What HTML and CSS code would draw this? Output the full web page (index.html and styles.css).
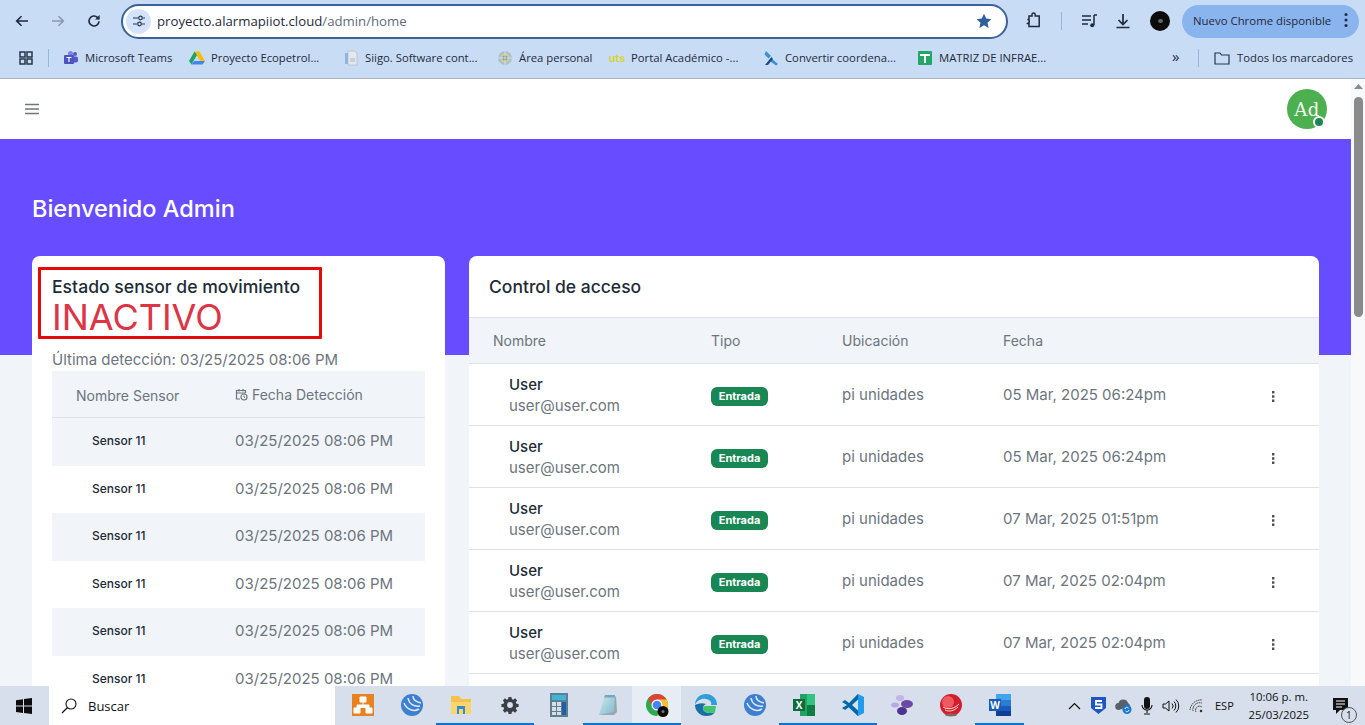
FILE: index.html
```html
<!DOCTYPE html>
<html lang="es">
<head>
    <meta charset="UTF-8">
    <title>Dashboard</title>
    <link rel="stylesheet" href="styles.css">
</head>
<body>
    <!-- navegador -->
    <header class="browser">
        <div class="toolbar">
            <svg class="nav-icon" viewBox="0 0 16 16"><path d="M14 8H3M7.5 3.2 2.700 8l4.800 4.800" fill="none" stroke="#1f2a3a" stroke-width="1.600"/></svg>
            <svg class="nav-icon" viewBox="0 0 16 16"><path d="M2 8h11M8.500 3.200 13.300 8l-4.800 4.800" fill="none" stroke="#8b98ab" stroke-width="1.600"/></svg>
            <svg class="nav-icon" viewBox="0 0 16 16"><path d="M13 8.200A5 5 0 1 1 11.400 4.300L13 6" fill="none" stroke="#1f2a3a" stroke-width="1.600"/><path d="M13.600 2v4.600H9z" fill="#1f2a3a"/></svg>
            <div class="omnibox">
                <span class="site-chip">
                    <svg width="14" height="14" viewBox="0 0 14 14"><path d="M1 4h5M10 10h3M1 10h4M11 4h2" stroke="#26364c" stroke-width="1.200" fill="none"/><circle cx="8.500" cy="4" r="1.800" fill="none" stroke="#26364c" stroke-width="1.200"/><circle cx="7.500" cy="10" r="1.800" fill="none" stroke="#26364c" stroke-width="1.200"/></svg>
                </span>
                <span class="url">proyecto.alarmapiiot.cloud<span class="url-path">/admin/home</span></span>
                <svg class="star" width="16" height="16" viewBox="0 0 16 16"><path d="m8 .8 2.200 4.800 5.200.6-3.900 3.500 1.100 5.200L8 12.300l-4.600 2.600 1.100-5.200L.6 6.200l5.200-.6z" fill="#2f5f9e"/></svg>
            </div>
            <svg class="tool-icon ext" viewBox="0 0 20 20"><path d="M5 5h3V3.500a1.600 1.600 0 0 1 3.200 0V5h4v10.500H5v-3H3.400v-.1a1.900 1.900 0 0 0 0-3.800H5z" fill="none" stroke="#1f2a3a" stroke-width="1.500"/></svg>
            <span class="tool-sep"></span>
            <svg class="tool-icon media" viewBox="0 0 20 20"><path d="M3 5h9M3 9h9M3 13h6" stroke="#1f2a3a" stroke-width="1.400"/><path d="M15 4v10" stroke="#1f2a3a" stroke-width="1.500"/><path d="M15 4h3" stroke="#1f2a3a" stroke-width="1.500"/><circle cx="13.200" cy="14.300" r="2" fill="#1f2a3a"/></svg>
            <svg class="tool-icon download" viewBox="0 0 20 20"><path d="M10 3v10M5.500 9l4.500 4.500L14.500 9M3.500 16.500h13" fill="none" stroke="#1f2a3a" stroke-width="1.700"/></svg>
            <span class="profile-dot"><span></span></span>
            <div class="update-pill">
                <span>Nuevo Chrome disponible</span>
                <svg width="4" height="16" viewBox="0 0 4 16"><circle cx="2" cy="2.500" r="1.500" fill="#1f2a3a"/><circle cx="2" cy="8" r="1.500" fill="#1f2a3a"/><circle cx="2" cy="13.500" r="1.500" fill="#1f2a3a"/></svg>
            </div>
        </div>
        <div class="bookmarks">
            <svg class="apps" width="14" height="14" viewBox="0 0 14 14"><path d="M1 1h5v5H1zM8 1h5v5H8zM1 8h5v5H1zM8 8h5v5H8z" fill="none" stroke="#26364c" stroke-width="1.500"/></svg>
            <span class="bm-sep"></span>
            <span class="bm"><svg class="fav" viewBox="0 0 16 16"><circle cx="12" cy="4" r="2" fill="#5059c9"/><rect x="9" y="6.500" width="6" height="6" rx="2" fill="#5059c9"/><circle cx="7.500" cy="3.500" r="2.500" fill="#7b83eb"/><rect x="1" y="5" width="10" height="9" rx="1" fill="#4b53bc"/><path d="M3.500 7.500h5M6 7.500V12" stroke="#fff" stroke-width="1.200"/></svg>Microsoft Teams</span>
            <span class="bm"><svg class="fav" viewBox="0 0 16 16"><path d="M5.500 1.500h5L16 11h-5z" fill="#fbbc04"/><path d="M5.500 1.500 0 11l2.500 3.500L8 5z" fill="#1fa463"/><path d="M2.500 14.500h11L16 11H5.200z" fill="#4285f4"/></svg>Proyecto Ecopetrol...</span>
            <span class="bm"><svg class="fav" viewBox="0 0 16 16"><path d="M5 1h7l2 2v12H5z" fill="#e3e8ee" stroke="#b5bfca" stroke-width=".8"/><path d="M2 3h3v11H2z" fill="#8fb6de"/><path d="M7 9h5M7 11h5" stroke="#aab4c0"/></svg>Siigo. Software cont...</span>
            <span class="bm"><svg class="fav" viewBox="0 0 16 16"><circle cx="8" cy="8" r="7" fill="#a9c4cc"/><circle cx="8" cy="8" r="4.500" fill="#d9c98f"/><circle cx="8" cy="8" r="2.500" fill="#6f9fb2"/><path d="M8 1v14M1 8h14" stroke="#e3ecef" stroke-width=".7"/></svg>Área personal</span>
            <span class="bm"><svg class="fav" viewBox="0 0 16 16"><text x="8" y="12" class="fav-uts">uts</text></svg>Portal Académico -...</span>
            <span class="bm"><svg class="fav" viewBox="0 0 16 16"><path d="m3 1 5 5-2.500 2.500-4-4z" fill="#3f8fd2"/><path d="m8 8 7 6-2 1.500-7-5z" fill="#3f8fd2"/><path d="M2 15 8.500 7l1.500 2-5 6z" fill="#1e4f80"/></svg>Convertir coordena...</span>
            <span class="bm"><svg class="fav" viewBox="0 0 16 16"><rect x="1" y="1" width="14" height="14" rx="1" fill="#23a566"/><path d="M3 5h10M8 5v8" stroke="#fff" stroke-width="2"/></svg>MATRIZ DE INFRAE...</span>
            <span class="bm-more">»</span>
            <span class="bm-sep"></span>
            <svg class="folder" width="16" height="14" viewBox="0 0 16 14"><path d="M1 2h5l1.500 2H15v9H1z" fill="none" stroke="#26364c" stroke-width="1.200"/></svg>
            <span class="bm-all">Todos los marcadores</span>
        </div>
    </header>

    <!-- pagina -->
    <div class="viewport">
        <main class="page">
            <div class="topbar">
                <svg width="16" height="12" viewBox="0 0 16 12"><path d="M1 1.500h14M1 6h14M1 10.500h14" stroke="#6c757d" stroke-width="1.700"/></svg>
                <span class="avatar">Ad<span class="avatar-status"></span></span>
            </div>
            <div class="content">
                <h1>Bienvenido Admin</h1>
                <div class="cards">
                    <section class="card sensor-card">
                        <div class="status-box">
                            <h2>Estado sensor de movimiento</h2>
                            <div class="status-value">INACTIVO</div>
                        </div>
                        <p class="last-seen">Última detección: 03/25/2025 08:06 PM</p>
                        <div class="sensor-table">
                            <div class="sensor-head">
                                <span>Nombre Sensor</span>
                                <span class="head-date">
                                    <svg width="13" height="13" viewBox="0 0 13 13"><path d="M5 11H1.500V2.500h9V5M1.500 5h9M4 1v2.500M8 1v2.500" fill="none" stroke="#6c757d" stroke-width="1.200"/><circle cx="9" cy="9" r="3" fill="none" stroke="#6c757d" stroke-width="1.200"/><path d="M9 7.500V9l1 .7" fill="none" stroke="#6c757d"/></svg>
                                    Fecha Detección
                                </span>
                            </div>
                            <div class="sensor-row"><span class="sensor-name">Sensor 11</span><span>03/25/2025 08:06 PM</span></div>
                            <div class="sensor-row"><span class="sensor-name">Sensor 11</span><span>03/25/2025 08:06 PM</span></div>
                            <div class="sensor-row"><span class="sensor-name">Sensor 11</span><span>03/25/2025 08:06 PM</span></div>
                            <div class="sensor-row"><span class="sensor-name">Sensor 11</span><span>03/25/2025 08:06 PM</span></div>
                            <div class="sensor-row"><span class="sensor-name">Sensor 11</span><span>03/25/2025 08:06 PM</span></div>
                            <div class="sensor-row"><span class="sensor-name">Sensor 11</span><span>03/25/2025 08:06 PM</span></div>
                        </div>
                    </section>
                    <section class="card access-card">
                        <h2 class="access-title">Control de acceso</h2>
                        <div class="access-head">
                            <span>Nombre</span><span>Tipo</span><span>Ubicación</span><span>Fecha</span>
                        </div>
                        <div class="access-row">
                            <div class="user"><strong>User</strong><span>user@user.com</span></div>
                            <span><span class="badge">Entrada</span></span>
                            <span>pi unidades</span>
                            <span>05 Mar, 2025 06:24pm</span>
                            <svg class="kebab" width="3" height="11" viewBox="0 0 3 11"><path d="M0 0h2.400v2.400H0zM0 4.300h2.400v2.400H0zM0 8.600h2.400V11H0z" fill="#495057"/></svg>
                        </div>
                        <div class="access-row">
                            <div class="user"><strong>User</strong><span>user@user.com</span></div>
                            <span><span class="badge">Entrada</span></span>
                            <span>pi unidades</span>
                            <span>05 Mar, 2025 06:24pm</span>
                            <svg class="kebab" width="3" height="11" viewBox="0 0 3 11"><path d="M0 0h2.400v2.400H0zM0 4.300h2.400v2.400H0zM0 8.600h2.400V11H0z" fill="#495057"/></svg>
                        </div>
                        <div class="access-row">
                            <div class="user"><strong>User</strong><span>user@user.com</span></div>
                            <span><span class="badge">Entrada</span></span>
                            <span>pi unidades</span>
                            <span>07 Mar, 2025 01:51pm</span>
                            <svg class="kebab" width="3" height="11" viewBox="0 0 3 11"><path d="M0 0h2.400v2.400H0zM0 4.300h2.400v2.400H0zM0 8.600h2.400V11H0z" fill="#495057"/></svg>
                        </div>
                        <div class="access-row">
                            <div class="user"><strong>User</strong><span>user@user.com</span></div>
                            <span><span class="badge">Entrada</span></span>
                            <span>pi unidades</span>
                            <span>07 Mar, 2025 02:04pm</span>
                            <svg class="kebab" width="3" height="11" viewBox="0 0 3 11"><path d="M0 0h2.400v2.400H0zM0 4.300h2.400v2.400H0zM0 8.600h2.400V11H0z" fill="#495057"/></svg>
                        </div>
                        <div class="access-row">
                            <div class="user"><strong>User</strong><span>user@user.com</span></div>
                            <span><span class="badge">Entrada</span></span>
                            <span>pi unidades</span>
                            <span>07 Mar, 2025 02:04pm</span>
                            <svg class="kebab" width="3" height="11" viewBox="0 0 3 11"><path d="M0 0h2.400v2.400H0zM0 4.300h2.400v2.400H0zM0 8.600h2.400V11H0z" fill="#495057"/></svg>
                        </div>
                        <div class="access-row"></div>
                    </section>
                </div>
            </div>
        </main>
        <div class="scrollbar">
            <svg width="9" height="5" viewBox="0 0 9 5"><path d="M4.500 0 9 5H0z" fill="#8a8a8a"/></svg>
            <span class="scroll-thumb"></span>
        </div>
    </div>

    <!-- barra de tareas -->
    <footer class="taskbar">
        <svg class="win-logo" width="16" height="16" viewBox="0 0 16 16"><path d="M0 2.200 7 1.200v6.400H0zM8 1l8-1v7.600H8zM0 8.500h7v6.400l-7-1zM8 8.500h8V16l-8-1.100z" fill="#0d0d0d"/></svg>
        <div class="search">
            <svg width="18" height="18" viewBox="0 0 18 18"><circle cx="11" cy="7" r="5" fill="none" stroke="#111" stroke-width="1.100"/><path d="M7.500 10.500 2 16" stroke="#111" stroke-width="1.300"/></svg>
            <span>Buscar</span>
        </div>
        <div class="apps-row">
            <span class="app"><svg viewBox="0 0 24 24"><rect x="1" y="1" width="22" height="22" fill="#e8811f"/><path d="M9 4h6v5H9zM3 15h6v5H3zM15 15h6v5h-6zM12 9v3M6 15v-3h12v3" fill="#fff" stroke="#fff"/></svg></span>
            <span class="app"><svg viewBox="0 0 24 24"><circle cx="12" cy="12" r="11" fill="#3f7fcf"/><path d="M4 10c3 7 10 9 15 6M8 5c1 6 6 9 12 8M13 3c0 4 3 6 8 7" fill="none" stroke="#dfeaf7" stroke-width="1.500"/></svg></span>
            <span class="app running"><svg viewBox="0 0 24 24"><path d="M2 3h8l2 3h10v15H2z" fill="#f4c24a"/><path d="M2 9h20v12H2z" fill="#fbd56c"/><path d="M8 13h8v8h-2v-5h-4v5H8z" fill="#2b8fd6"/></svg></span>
            <span class="app running"><svg class="gear" viewBox="0 0 24 24"><path d="M10 2h4l.5 3 2 .8L19 4l2.800 2.800L20 9.300l.8 2 3 .5v4l-3 .5-.8 2 1.800 2.500L19 23.600l-2.500-1.800-2 .8-.5 3h-4l-.5-3-2-.8L5 23.600l-2.800-2.800L4 18.300l-.8-2-3-.5v-4l3-.5.8-2-1.800-2.500L5 4l2.500 1.800 2-.8z" transform="translate(1.500 0.500) scale(.875)" fill="#3b3f46"/><circle cx="12" cy="12" r="3.500" fill="#d6dfeb"/></svg></span>
            <span class="app"><svg viewBox="0 0 24 24"><rect x="3" y="0" width="18" height="24" fill="#5f7f91"/><rect x="5" y="2" width="14" height="5" fill="#3fb6d8"/><path d="M5 9h4v4H5zM10 9h4v4h-4zM5 14h4v4H5zM10 14h4v4h-4zM5 19h4v3H5zM10 19h4v3h-4z" fill="#d8dfe4"/><path d="M15 9h4v13h-4z" fill="#1e5fa8"/></svg></span>
            <span class="app running"><svg viewBox="0 0 24 24"><defs><linearGradient id="nota" x1="0" y1="0" x2="1" y2="1"><stop offset="0" stop-color="#cfe9ef"/><stop offset="1" stop-color="#7fb9cc"/></linearGradient></defs><path d="M20 3l1 16-3 3H3z" fill="#9aa6a8"/><path d="M9 2h10l-1 17-15 3z" fill="url(#nota)"/><path d="M9 2h10l-.3 2.500H8z" fill="#6fa9bb"/></svg></span>
            <span class="app running active"><svg viewBox="0 0 24 24"><circle cx="12" cy="12" r="11" fill="#2da94f"/><path d="M21.530 6.500A11 11 0 0 0 3.300 5.200L7.500 14.600 12 12z" fill="#dd4437"/><path d="M21.530 6.500A11 11 0 0 1 12 23l4.500-8.500L12 6.500z" fill="#fbc02d"/><circle cx="12" cy="12" r="5.500" fill="#fff"/><circle cx="12" cy="12" r="4.300" fill="#4285f4"/><circle cx="18" cy="18.500" r="5.500" fill="#0c0c0c"/><circle cx="18" cy="18.500" r="1.500" fill="#777"/></svg></span>
            <span class="app"><svg viewBox="0 0 24 24"><path d="M23 12C23 5 18 1 12 1 5 1 1 6 1 12c2-5 7-7 11-6 5 1 6 4 5 6h6z" fill="#2d9fd8"/><path d="M1 12c0 6 5 11 11 11 4 0 7-1 9-4-5 2-12 1-12-4 0-2 1-3 3-4-5-2-9 0-11 1z" fill="#1770a8"/><path d="M9 15c0 5 7 6 12 4l1-6H11c-1 0-2 1-2 2z" fill="#45c46b"/></svg></span>
            <span class="app"><svg viewBox="0 0 24 24"><circle cx="12" cy="12" r="11" fill="#3f7fcf"/><path d="M4 10c3 7 10 9 15 6M8 5c1 6 6 9 12 8M13 3c0 4 3 6 8 7" fill="none" stroke="#dfeaf7" stroke-width="1.500"/></svg></span>
            <span class="app running"><svg viewBox="0 0 24 24"><path d="M8 1h15v22H8z" fill="#21a366"/><path d="M15 1h8v11h-8z" fill="#33c481"/><path d="M15 12h8v11h-8z" fill="#107c41"/><rect x="1" y="6" width="12" height="12" fill="#0c6b38"/><text x="7" y="15.500" class="app-letter">X</text></svg></span>
            <span class="app running"><svg viewBox="0 0 24 24"><path d="M17 1 23 4v16l-6 3L6 13z" fill="#1f9cf0"/><path d="M17 1v22L8 14l-4 3-3-2 5-3-5-3 3-2 4 3z" fill="#0065a9"/><path d="m17 6.500-6 5.500 6 5.500z" fill="#d6dfeb"/></svg></span>
            <span class="app"><svg viewBox="0 0 24 24"><ellipse cx="10" cy="5" rx="4" ry="3" fill="#c4b5e8"/><ellipse cx="5" cy="12" rx="4" ry="2.500" fill="#b9a7e6"/><ellipse cx="17" cy="11" rx="6" ry="4" fill="#6a4aa5"/><ellipse cx="12" cy="18" rx="5" ry="4" fill="#4e3390"/></svg></span>
            <span class="app"><svg viewBox="0 0 24 24"><circle cx="12" cy="12" r="11" fill="#d31e2b"/><circle cx="9" cy="9" r="6" fill="#ee5a5f"/><path d="M4 14c5 3 11 2 16-3M6 17c4 2 9 1 13-3" fill="none" stroke="#fbdcdc" stroke-width="1"/><ellipse cx="12" cy="22" rx="6" ry="1.500" fill="#866"/></svg></span>
            <span class="app running"><svg viewBox="0 0 24 24"><path d="M8 1h15v22H8z" fill="#2b7cd3"/><path d="M8 1h15v6H8z" fill="#41a5ee"/><path d="M8 13h15v5H8z" fill="#185abd"/><path d="M8 18h15v5H8z" fill="#103f91"/><rect x="1" y="6" width="12" height="12" fill="#1a5bb5"/><text x="7" y="15.500" class="app-letter">W</text></svg></span>
        </div>
        <div class="tray">
            <svg class="tray-chevron" width="13" height="8" viewBox="0 0 13 8"><path d="m1 7 5.500-5.500L12 7" fill="none" stroke="#111" stroke-width="1.200"/></svg>
            <svg class="tray-s" width="15" height="17" viewBox="0 0 15 17"><path d="M0 0h15v11l-7.500 6L0 11z" fill="#1e56c4"/><path d="M11 4H5v3.500h5.500v3.500H4" fill="none" stroke="#fff" stroke-width="1.800"/></svg>
            <svg class="tray-cloud" width="17" height="16" viewBox="0 0 17 16"><path d="M4 12a3.500 3.500 0 0 1-.5-7A5 5 0 0 1 13 5a3.500 3.500 0 0 1 2 3" fill="#5a6068"/><circle cx="12" cy="11.500" r="4.500" fill="#1976d2"/><path d="M10 11a2 2 0 0 1 3.500-1M14 12a2 2 0 0 1-3.500 1" fill="none" stroke="#fff"/></svg>
            <svg class="tray-mic" width="12" height="18" viewBox="0 0 12 18"><rect x="3" y="0" width="6" height="12" rx="3" fill="#111"/><path d="M1 8a5 5 0 0 0 10 0M6 13v3M3 17h6" fill="none" stroke="#111" stroke-width="1.100"/></svg>
            <svg class="tray-vol" width="18" height="16" viewBox="0 0 18 16"><path d="M1 6h2.500L7 3v10L3.500 10H1z" fill="none" stroke="#111"/><path d="M10 5.500a3.500 3.500 0 0 1 0 5M12 3.500a6.500 6.500 0 0 1 0 9M14 1.500a9 9 0 0 1 0 13" fill="none" stroke="#111"/></svg>
            <svg class="tray-wifi" width="15" height="15" viewBox="0 0 15 15"><path d="M1 12A11 11 0 0 1 13 2M4 13a7 7 0 0 1 9-8M7 14a4 4 0 0 1 6-5" fill="none" stroke="#333" stroke-dasharray="1.500 .7"/><circle cx="12" cy="13" r="1.300" fill="#333"/></svg>
            <span class="tray-lang">ESP</span>
            <span class="clock"><span>10:06 p. m.</span><span>25/03/2025</span></span>
            <span class="notif">
                <svg width="18" height="18" viewBox="0 0 18 18"><path d="M1 1h15v12H8l-4 4v-4H1z" fill="#111"/><path d="M4 4h9M4 7h9M4 10h6" stroke="#fff" stroke-width="1"/></svg>
                <span class="notif-count">1</span>
            </span>
        </div>
    </footer>
</body>
</html>
```

FILE: styles.css
```css
:root {
    --purple: #674dff;
    --page-bg: #f1f4f9;
    --text-dark: #212b36;
    --text-muted: #6c757d;
    --line: #dee2e6;
    --chrome: #c9dcf5;
}

* {
    box-sizing: border-box;
}

body {
    margin: 0;
    height: 725px;
    overflow: hidden;
    display: flex;
    flex-direction: column;
    font-family: Inter, "Liberation Sans", sans-serif;
    background-color: var(--page-bg);
}

/* navegador */
.browser {
    height: 79px;
    flex: none;
    background-color: var(--chrome);
    border-bottom: 1px solid #a9b4c4;
    font-family: "Open Sans", "Liberation Sans", sans-serif;
    color: #1f2a3a;
}

.toolbar {
    height: 42px;
    display: flex;
    align-items: center;
    padding-left: 14px;
}

.nav-icon {
    width: 16px;
    height: 16px;
    margin-right: 20px;
    flex: none;
}

.omnibox {
    width: 887px;
    height: 35px;
    margin-left: -1px;
    display: flex;
    align-items: center;
    background-color: white;
    border: 2px solid #3b6397;
    border-radius: 18px;
    padding: 0 8px 0 3px;
    flex: none;
}

.site-chip {
    width: 25px;
    height: 25px;
    border-radius: 50%;
    background-color: #d3e3fd;
    display: flex;
    align-items: center;
    justify-content: center;
    flex: none;
}

.url {
    margin-left: 6px;
    font-size: 13.2px;
    color: #1f2a3a;
    flex: 1;
}

.url-path {
    color: #5f6b7a;
}

.star {
    margin-right: 6px;
}

.tool-icon {
    width: 20px;
    height: 20px;
    flex: none;
}

.ext {
    margin-left: 16px;
}

.tool-sep {
    width: 1px;
    height: 18px;
    background-color: #9db5d6;
    margin: 0 17px;
    flex: none;
}

.download {
    margin-left: 14px;
}

.profile-dot {
    width: 20px;
    height: 20px;
    margin-left: 17px;
    border-radius: 50%;
    background-color: #0b0b0b;
    display: flex;
    align-items: center;
    justify-content: center;
    flex: none;
}

.profile-dot span {
    width: 5px;
    height: 4px;
    border-radius: 50%;
    background-color: #666;
}

.update-pill {
    width: 177px;
    height: 33px;
    margin-left: 12px;
    border-radius: 17px;
    background-color: #8ab4ee;
    display: flex;
    align-items: center;
    justify-content: space-between;
    padding: 0 11px 2px 11px;
    font-size: 11.4px;
    flex: none;
}

.bookmarks {
    height: 36px;
    display: flex;
    align-items: center;
    padding: 0 0 5px 19px;
    font-size: 11.3px;
}

.apps {
    flex: none;
}

.bm-sep {
    width: 1px;
    height: 18px;
    background-color: #9db5d6;
    margin: 0 14px 0 15px;
    flex: none;
}

.bm {
    width: 154px;
    display: flex;
    align-items: center;
    gap: 6px;
    white-space: nowrap;
    flex: none;
}

.bm:nth-of-type(2) {
    width: 126px;
}

.bm:nth-of-type(5) {
    width: 112px;
}

.fav {
    width: 16px;
    height: 16px;
    flex: none;
}

.fav-uts {
    fill: #d8d52a;
    font-family: "Liberation Sans", sans-serif;
    font-size: 11px;
    font-weight: 700;
    text-anchor: middle;
}

.bm-more {
    margin-left: 101px;
    width: 11px;
    font-size: 15px;
    line-height: 1;
    margin-top: -3px;
}

.folder {
    margin-left: 1px;
}

.bm-all {
    margin-left: 7px;
    white-space: nowrap;
}

/* pagina */
.viewport {
    flex: 1;
    min-height: 0;
    display: flex;
}

.page {
    width: 1351px;
    flex: none;
    overflow: hidden;
}

.topbar {
    height: 60px;
    background-color: white;
    display: flex;
    align-items: center;
    justify-content: space-between;
    padding: 0 24px;
}

.avatar {
    position: relative;
    width: 40px;
    height: 40px;
    border-radius: 50%;
    background-color: #4caf50;
    color: #f4f7f2;
    font-family: "DejaVu Serif", serif;
    font-size: 18px;
    letter-spacing: .5px;
    display: flex;
    align-items: center;
    justify-content: center;
}

/* bolita encima del avatar */
.avatar-status {
    position: absolute;
    right: 2px;
    bottom: 1px;
    width: 12px;
    height: 12px;
    border-radius: 50%;
    background-color: #198754;
    border: 2px solid white;
}

.content {
    padding: 55px 32px 0;
    background: linear-gradient(var(--purple) 216px, var(--page-bg) 216px);
}

h1 {
    margin: 0 0 32px;
    height: 30px;
    font-size: 23.5px;
    line-height: 30px;
    font-weight: 500;
    color: white;
}

.cards {
    display: flex;
    gap: 24px;
    align-items: flex-start;
}

.card {
    background-color: white;
    border-radius: 8px;
}

.sensor-card {
    width: 413px;
    flex: none;
    padding: 11px 20px 0;
}

.status-box {
    width: 284px;
    height: 72px;
    margin-left: -14px;
    padding: 7px 0 0 11px;
    border: 3px solid #e40a0a;
    border-radius: 1px;
}

.status-box h2 {
    margin: 0;
    font-size: 17.6px;
    line-height: 20px;
    font-weight: 450;
    color: var(--text-dark);
    white-space: nowrap;
}

.status-value {
    font-size: 36px;
    line-height: 41px;
    color: #dc3545;
    white-space: nowrap;
}

.last-seen {
    margin: 11px 0 0;
    font-size: 15px;
    line-height: 20px;
    color: var(--text-muted);
    white-space: nowrap;
}

.sensor-table {
    font-size: 15px;
    color: var(--text-muted);
    margin-top: 1px;
}

.sensor-head {
    height: 47px;
    display: grid;
    grid-template-columns: 159px 1fr;
    align-items: center;
    padding-left: 24px;
    font-size: 14px;
    font-weight: 400;
    background-color: var(--page-bg);
    border-bottom: 1px solid var(--line);
}

.sensor-head span:first-child {
    margin-top: 2px;
}

.head-date {
    display: flex;
    align-items: center;
    gap: 4px;
}

.sensor-row {
    height: 47.5px;
    display: grid;
    grid-template-columns: 143px 1fr;
    align-items: center;
    padding: 0 0 2px 40px;
    white-space: nowrap;
}

.sensor-row:nth-child(even) {
    background-color: var(--page-bg);
}

.sensor-name {
    font-size: 12px;
    font-weight: 450;
    color: var(--text-dark);
}

.access-card {
    width: 850px;
    flex: none;
    font-size: 15px;
    color: var(--text-muted);
}

.access-title {
    margin: 0;
    height: 62px;
    padding: 20px 20px 0;
    font-size: 17.5px;
    line-height: 22px;
    font-weight: 450;
    color: var(--text-dark);
    border-bottom: 1px solid var(--line);
}

.access-head,
.access-row {
    display: grid;
    grid-template-columns: 218px 131px 161px 1fr 3px;
    align-items: center;
    padding-left: 24px;
    padding-right: 44px;
}

.access-head {
    height: 46px;
    font-size: 14px;
    background-color: var(--page-bg);
    border-bottom: 1px solid var(--line);
}

.access-row {
    height: 62px;
    border-bottom: 1px solid var(--line);
}

.user {
    padding-left: 16px;
    display: flex;
    flex-direction: column;
    gap: 2px;
    line-height: 19px;
}

.user strong {
    font-weight: 450;
    color: var(--text-dark);
}

.badge {
    display: inline-block;
    width: 57px;
    height: 19px;
    margin-top: 3px;
    border-radius: 6px;
    background-color: #198754;
    color: white;
    font-size: 11px;
    font-weight: 700;
    line-height: 19px;
    text-align: center;
}

.kebab {
    margin-top: 3px;
}

.scrollbar {
    width: 14px;
    flex: none;
    background-color: #f8f9fb;
    display: flex;
    flex-direction: column;
    align-items: center;
    padding-top: 5px;
}

.scroll-thumb {
    width: 9px;
    height: 220px;
    margin-top: 8px;
    border-radius: 5px;
    background-color: #8a8a8a;
}

/* barra de tareas */
.taskbar {
    height: 39px;
    flex: none;
    display: flex;
    align-items: center;
    background-color: #d6dfeb;
    font-family: "Open Sans", "Liberation Sans", sans-serif;
    color: #111;
}

.win-logo {
    margin-left: 16px;
    flex: none;
}

.search {
    width: 286px;
    height: 39px;
    margin-left: 17px;
    background-color: white;
    display: flex;
    align-items: center;
    gap: 10px;
    padding-left: 11px;
    font-size: 13px;
    flex: none;
}

.apps-row {
    display: flex;
    margin-left: 3px;
    flex: none;
}

.app {
    width: 49px;
    height: 39px;
    display: flex;
    align-items: center;
    justify-content: center;
    border-bottom: 2px solid transparent;
}

.app svg {
    width: 24px;
    height: 24px;
    overflow: visible;
}

.app .gear {
    width: 20px;
    height: 20px;
}

.app.running {
    border-bottom-color: #0a74d0;
}

.app.active {
    background-color: #e7edf5;
}

.app-letter {
    fill: white;
    font-size: 10px;
    font-weight: 700;
    text-anchor: middle;
}

.tray {
    flex: 1;
    display: flex;
    align-items: center;
    padding-left: 44px;
}

.tray-s {
    margin-left: 10px;
}

.tray-cloud {
    margin-left: 9px;
}

.tray-mic {
    margin-left: 9px;
}

.tray-vol {
    margin-left: 9px;
}

.tray-wifi {
    margin-left: 9px;
}

.tray-lang {
    margin-left: 11px;
    font-size: 11px;
}

.clock {
    margin-left: 13px;
    width: 64px;
    display: flex;
    flex-direction: column;
    align-items: center;
    gap: 2px;
    font-size: 11.4px;
    line-height: 16px;
}

.notif {
    position: relative;
    margin-left: 21px;
    display: flex;
}

/* contador encima del icono */
.notif-count {
    position: absolute;
    right: -7px;
    bottom: -8px;
    width: 16px;
    height: 16px;
    border-radius: 50%;
    background-color: #d6dfeb;
    border: 1px solid #555;
    font-size: 10px;
    line-height: 14px;
    text-align: center;
}
```
